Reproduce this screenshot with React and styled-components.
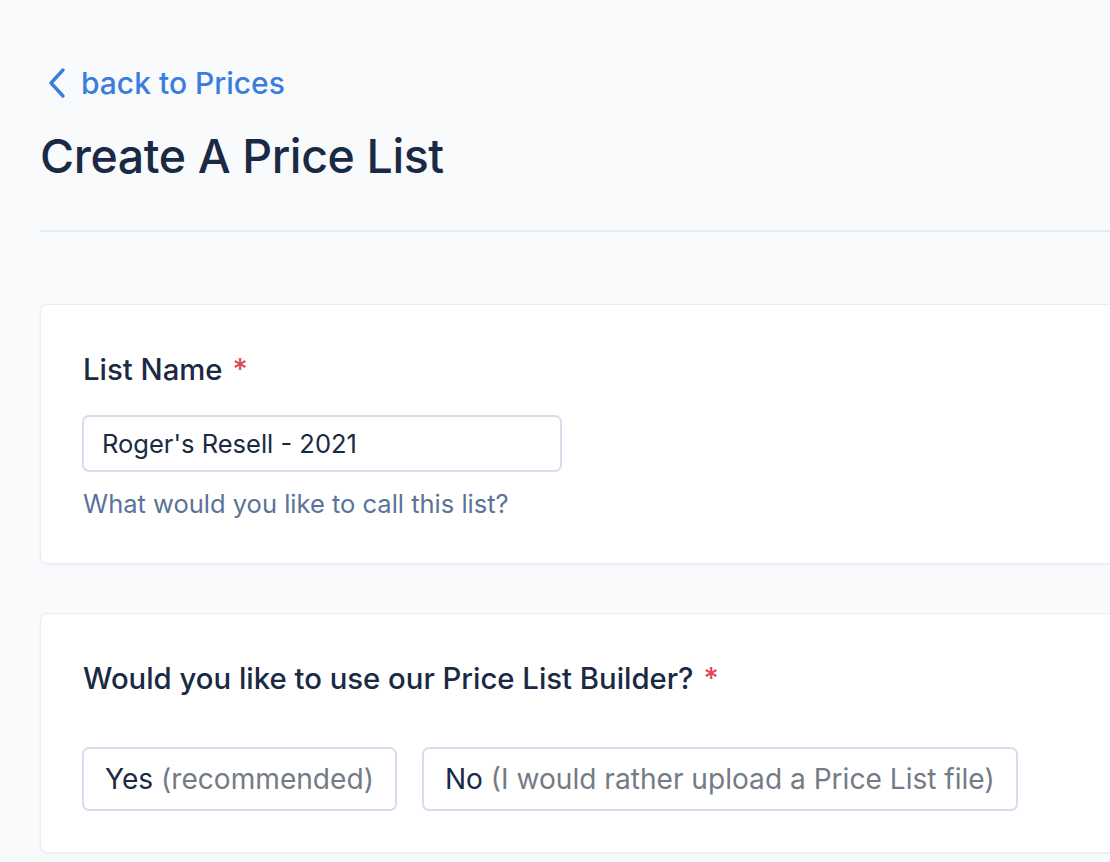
import styled, { createGlobalStyle } from 'styled-components'

const GlobalStyle = createGlobalStyle`
  html, body {
    margin: 0;
    padding: 0;
    background: #f8fafc;
    overflow: hidden;
  }
  body {
    font-family: Inter, "Noto Sans", sans-serif;
    color: #1a2a44;
  }
`;

const Page = styled.div`
  width: 1240px;
  padding: 60px 0 40px 40px;
  box-sizing: border-box;
`;

const BackLink = styled.a`
  display: flex;
  align-items: center;
  gap: 14px;
  margin-left: 7px;
  height: 46px;
  font-size: 30px;
  font-weight: 500;
  color: #3b7ddd;
  text-decoration: none;
`;

const Title = styled.h1`
  margin: 18px 0 0;
  font-size: 46.5px;
  font-weight: 500;
  letter-spacing: -0.4px;
  line-height: 64px;
  color: #1a2a44;
`;

const Divider = styled.hr`
  margin: 42px 0 72px;
  border: 0;
  height: 2px;
  background: #e6ebf3;
`;

const Card = styled.section`
  background: #ffffff;
  border: 1px solid #e8edf3;
  border-radius: 8px;
  box-shadow: 0 1px 3px rgba(20, 40, 80, 0.05);
  padding: 48px 42px ${p => p.$bottom || 48}px;
  margin-bottom: 49px;
`;

const Label = styled.div`
  font-size: 29.3px;
  font-weight: 500;
  line-height: 34px;
  color: #1a2a44;
`;

const Required = styled.span`
  color: #e0485a;
  margin-left: 10px;
`;

const Input = styled.input`
  display: block;
  box-sizing: border-box;
  width: 480px;
  height: 57px;
  margin: 28px 0 0 -1px;
  padding: 0 18px;
  border: 2px solid #d5deec;
  border-radius: 7px;
  font-family: Inter, "Noto Sans", sans-serif;
  font-size: 25.5px;
  color: #1a2a44;
  background: #fff;
  outline: none;
`;

const Hint = styled.div`
  margin-top: 17px;
  font-size: 25.5px;
  line-height: 30px;
  color: #5b7399;
  margin-bottom: -4px;
`;

const Options = styled.div`
  display: flex;
  gap: 25px;
  margin: 51px 0 0 -1px;
`;

const Option = styled.button`
  height: 64px;
  padding: 0 21px;
  border: 2px solid #d5deec;
  border-radius: 7px;
  background: #fff;
  font-family: Inter, "Noto Sans", sans-serif;
  font-size: 28.1px;
  color: #1a2a44;
  cursor: pointer;
`;

const Note = styled.span`
  color: #737b86;
`;

function Chevron() {
  return (
    <svg width="20" height="32" viewBox="0 0 20 32" fill="none">
      <path d="M16 3 L4 16 L16 29" stroke="#3b7ddd" strokeWidth="3.4" strokeLinecap="round" strokeLinejoin="round" />
    </svg>
  );
}

export default function App() {
  return (
    <Page>
      <GlobalStyle />
      <BackLink href="#">
        <Chevron />
        back to Prices
      </BackLink>
      <Title>Create A Price List</Title>
      <Divider />
      <Card>
        <Label>List Name<Required>*</Required></Label>
        <Input defaultValue="Roger's Resell - 2021" />
        <Hint>What would you like to call this list?</Hint>
      </Card>
      <Card $bottom={41}>
        <Label>Would you like to use our Price List Builder?<Required>*</Required></Label>
        <Options>
          <Option>Yes <Note>(recommended)</Note></Option>
          <Option>No <Note>(I would rather upload a Price List file)</Note></Option>
        </Options>
      </Card>
    </Page>
  );
}
